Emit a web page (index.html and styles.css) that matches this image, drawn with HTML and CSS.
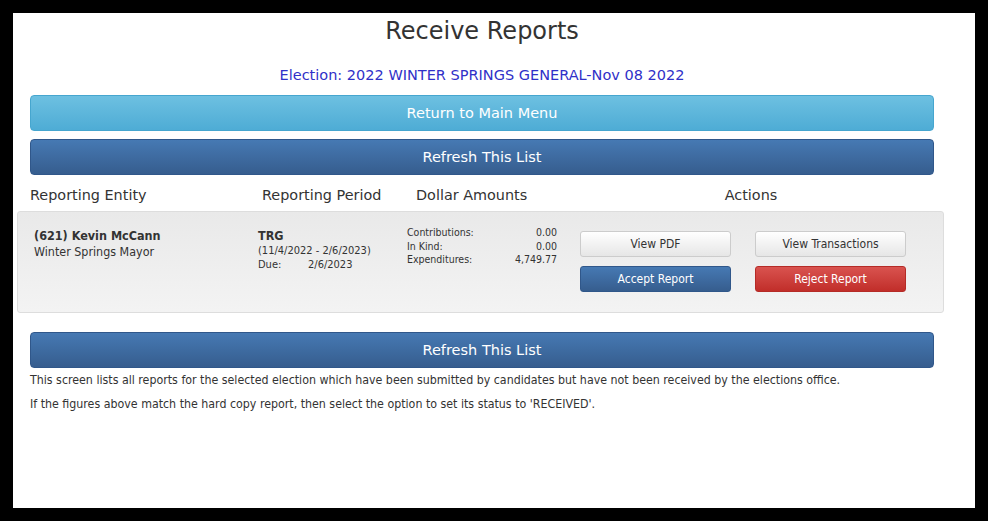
FILE: index.html
```html
<!DOCTYPE html>
<html lang="en">
<head>
	<meta charset="UTF-8" />
	<title>Receive Reports</title>
	<link rel="stylesheet" href="styles.css">
</head>
<body>

	<div class="sheet">
		<div class="content">
			<h1 class="page-title">Receive Reports</h1>
			<div class="election-name">Election: 2022 WINTER SPRINGS GENERAL-Nov 08 2022</div>

			<button class="wide-button wide-button--info">Return to Main Menu</button>
			<button class="wide-button wide-button--primary">Refresh This List</button>

			<div class="report-head">
				<div class="report-head__entity">Reporting Entity</div>
				<div class="report-head__period">Reporting Period</div>
				<div class="report-head__amounts">Dollar Amounts</div>
				<div class="report-head__actions">Actions</div>
			</div>

			<div class="report">
				<div class="report__entity">
					<div class="report__name">(621) Kevin McCann</div>
					<div class="report__office">Winter Springs Mayor</div>
				</div>
				<div class="report__period">
					<div class="report__code">TRG</div>
					<div class="report__dates">(11/4/2022 - 2/6/2023)</div>
					<div class="report__due"><span class="report__due-label">Due:</span>2/6/2023</div>
				</div>
				<div class="report__amounts">
					<div class="amount"><span>Contributions:</span><span>0.00</span></div>
					<div class="amount"><span>In Kind:</span><span>0.00</span></div>
					<div class="amount"><span>Expenditures:</span><span>4,749.77</span></div>
				</div>
				<div class="report__actions">
					<button class="small-button small-button--plain">View PDF</button>
					<button class="small-button small-button--plain">View Transactions</button>
					<button class="small-button small-button--primary">Accept Report</button>
					<button class="small-button small-button--danger">Reject Report</button>
				</div>
			</div>

			<button class="wide-button wide-button--primary wide-button--bottom">Refresh This List</button>

			<p class="note">This screen lists all reports for the selected election which have been submitted by candidates but have not been received by the elections office.</p>
			<p class="note">If the figures above match the hard copy report, then select the option to set its status to 'RECEIVED'.</p>
		</div>
	</div>

</body>
</html>
```

FILE: styles.css
```css
* {
	box-sizing: border-box;
}

html {
	margin: 0px;
	padding: 0px;
}

body {
	margin: 0px;
	padding: 13px;
	background-color: #000000;
	font-family: "DejaVu Sans Condensed", "DejaVu Sans", sans-serif;
	color: #333333;
}

.sheet {
	width: 962px;
	height: 495px;
	background-color: #ffffff;
	padding-left: 4px;
}

.content {
	width: 927px;
}

.page-title {
	margin: 0px;
	padding-left: 13px;
	padding-right: 10px;
	text-align: center;
	font-family: "DejaVu Sans", sans-serif;
	font-size: 24px;
	font-weight: normal;
	line-height: 36px;
	color: #333333;
}

.election-name {
	margin-top: 17px;
	padding-left: 13px;
	padding-right: 10px;
	text-align: center;
	font-family: "DejaVu Sans", sans-serif;
	font-size: 14.5px;
	line-height: 18px;
	color: #3030c8;
}

.wide-button {
	display: block;
	width: 904px;
	height: 36px;
	margin: 0px 10px 0px 13px;
	border-radius: 4px;
	font-family: "DejaVu Sans", sans-serif;
	font-size: 14.5px;
	color: #ffffff;
	cursor: pointer;
}

.wide-button--info {
	margin-top: 11px;
	border: 1px solid #46a6cf;
	background: linear-gradient(#6dc0e1, #4eacd5);
}

.wide-button--primary {
	margin-top: 8px;
	border: 1px solid #30578a;
	background: linear-gradient(#4679b3, #365d8e);
}

.wide-button--bottom {
	margin-top: 19px;
}

.report-head {
	display: flex;
	margin-top: 11px;
	padding-left: 13px;
	font-family: "DejaVu Sans", sans-serif;
	font-size: 14.4px;
	line-height: 18px;
}

.report-head__entity {
	width: 232px;
}

.report-head__period {
	width: 154px;
}

.report-head__amounts {
	width: 160px;
}

.report-head__actions {
	width: 350px;
	text-align: center;
}

.report {
	display: flex;
	height: 102px;
	margin-top: 7px;
	padding: 16px 0px 0px 16px;
	border: 1px solid #dddddd;
	border-radius: 3px;
	background: linear-gradient(#e9e9e9, #f3f3f3);
	font-size: 12px;
}

.report__entity {
	width: 224px;
}

.report__name {
	font-weight: bold;
	font-size: 12.5px;
	line-height: 16px;
}

.report__office {
	font-size: 12.4px;
	line-height: 16px;
}

.report__period {
	width: 149px;
}

.report__code {
	font-weight: bold;
	font-size: 12.5px;
	line-height: 16px;
}

.report__dates,
.report__due {
	font-size: 11px;
	line-height: 14px;
}

.report__due-label {
	display: inline-block;
	width: 50px;
}

.report__amounts {
	width: 150px;
	margin-top: -2px;
	font-size: 10.5px;
	line-height: 13.5px;
}

.amount {
	display: flex;
	justify-content: space-between;
}

.report__actions {
	display: grid;
	grid-template-columns: 151px 151px;
	column-gap: 24px;
	row-gap: 9px;
	margin-left: 23px;
	align-content: start;
	margin-top: 3px;
}

.small-button {
	height: 26px;
	border-radius: 3px;
	font-family: inherit;
	font-size: 12px;
	cursor: pointer;
}

.small-button--plain {
	border: 1px solid #cccccc;
	background: linear-gradient(#ffffff, #e6e6e6);
	color: #333333;
}

.small-button--primary {
	border: 1px solid #30578a;
	background: linear-gradient(#4679b3, #365d8e);
	color: #ffffff;
}

.small-button--danger {
	border: 1px solid #b52b27;
	background: linear-gradient(#d9534f, #c12e2a);
	color: #ffffff;
}

.note {
	margin: 6px 0px 0px 13px;
	font-size: 12.3px;
	line-height: 12px;
	color: #333333;
}

.note + .note {
	margin-top: 12px;
}
```
